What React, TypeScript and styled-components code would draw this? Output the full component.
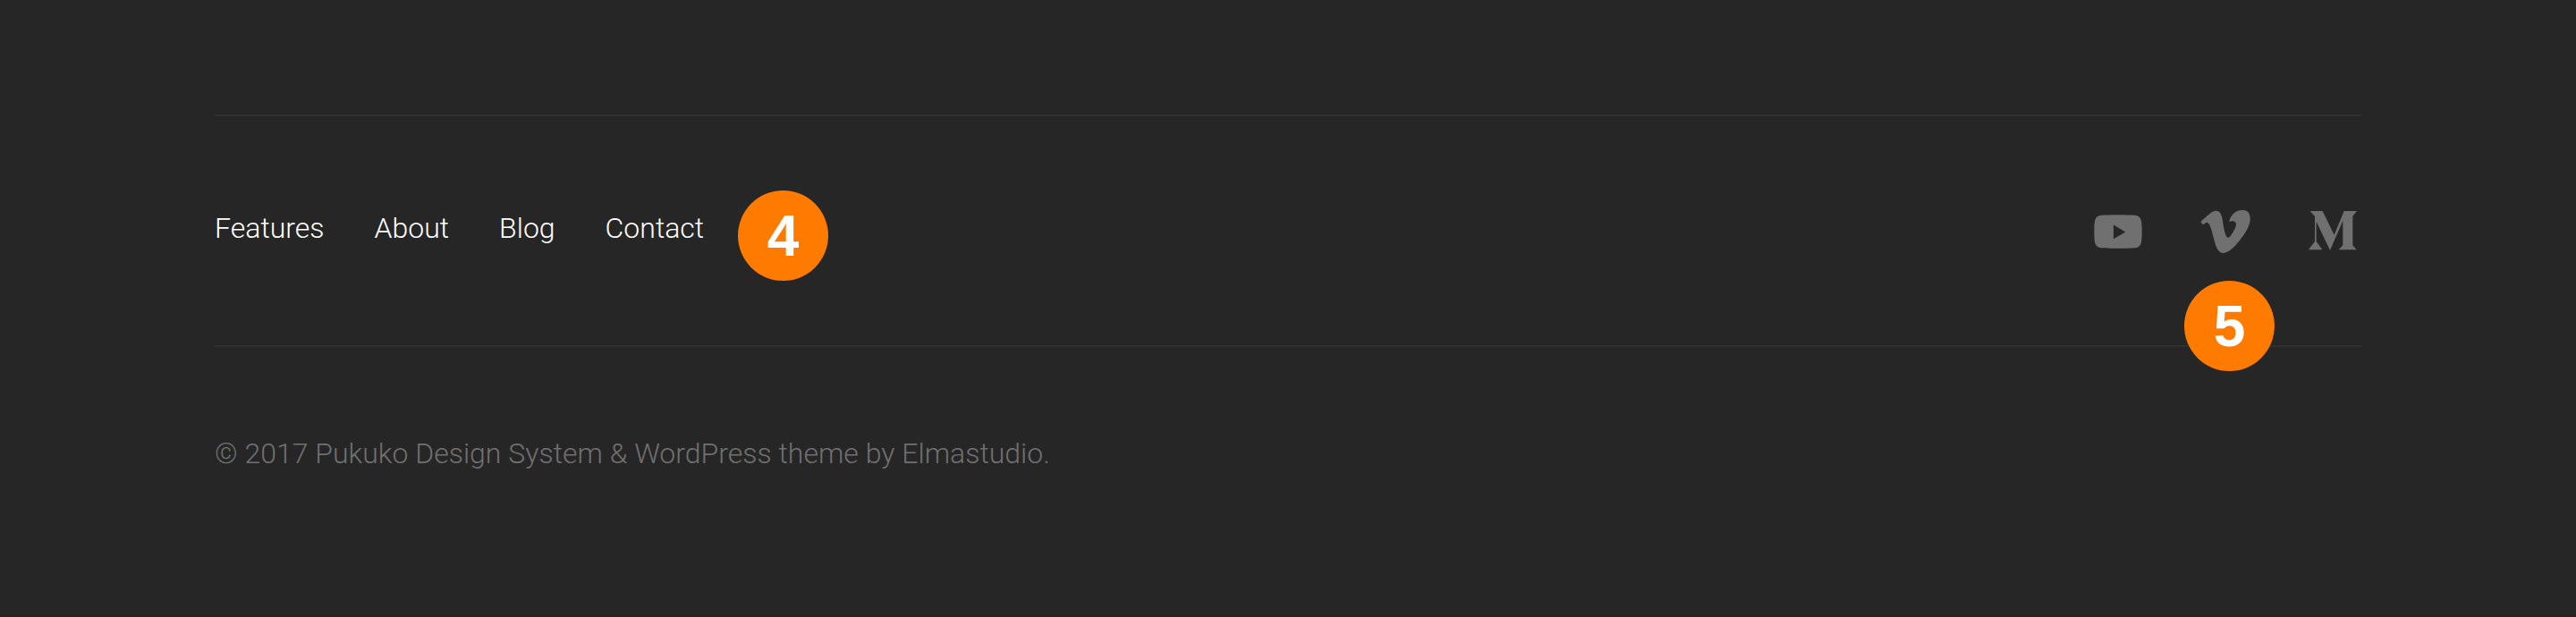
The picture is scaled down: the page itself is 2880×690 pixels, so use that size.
import React from 'react';
import styled, { createGlobalStyle } from 'styled-components';

const GlobalStyle = createGlobalStyle`
  *, *::before, *::after { box-sizing: border-box; }
  body {
    margin: 0;
    background: #262626;
    font-family: Roboto, "Liberation Sans", sans-serif;
    font-weight: 300;
    font-size: 32px;
    line-height: 48px;
  }
`;

const Footer = styled.footer`
  padding: 128px calc(100% / 12) 157px;
  border-bottom: 2px solid #252324;
`;

const FooterBar = styled.div`
  display: flex;
  flex-wrap: wrap;
  justify-content: space-between;
  align-items: flex-start;
  gap: 32px;
  padding: 97px 0 95px;
  border-top: 2px solid #303030;
  border-bottom: 2px solid #303030;
`;

const LinkList = styled.ul`
  position: relative;
  display: flex;
  gap: 56px;
  margin: 0;
  padding: 0;
  list-style: none;
`;

const NavItem = styled.li`
  padding-top: 4px;
`;

const NavLink = styled.a`
  display: block;
  color: #fff;
  text-decoration: none;
`;

const SocialItem = styled.li`
  position: relative;
`;

const SocialLink = styled.a`
  display: block;
  height: 64px;
  color: #707070;
`;

const Icon = styled.svg`
  display: block;
  width: 64px;
  height: 64px;
  fill: currentColor;
`;

const Badge = styled.span`
  position: absolute;
  display: flex;
  align-items: center;
  justify-content: center;
  width: 101px;
  height: 101px;
  border-radius: 50%;
  background: #ff7b00;
  color: #fff;
  font: bold 64px/64px "Liberation Sans", Arial, sans-serif;
`;

const NavBadge = styled(Badge)`
  top: -14px;
  left: calc(100% + 38px);
`;

const SocialBadge = styled(Badge)`
  top: 87px;
  left: -14px;
`;

const Copyright = styled.p`
  margin: 0;
  padding-top: 95px;
  color: #707070;
`;

const pages = ['Features', 'About', 'Blog', 'Contact'];

const networks = [
  {
    name: 'YouTube',
    viewBox: '0 0 24 24',
    path: 'M21.8 8.001s-.195-1.378-.795-1.985c-.76-.797-1.613-.801-2.004-.847-2.799-.202-6.997-.202-6.997-.202h-.009s-4.198 0-6.997.202c-.39.047-1.242.051-2.003.847-.6.607-.795 1.985-.795 1.985S2 9.62 2 11.238v1.517c0 1.618.2 3.237.2 3.237s.195 1.378.795 1.985c.761.797 1.76.771 2.205.855 1.6.153 6.8.201 6.8.201s4.203-.006 7.001-.209c.391-.047 1.243-.051 2.004-.847.6-.607.795-1.985.795-1.985s.2-1.618.2-3.237v-1.517C22 9.62 21.8 8.001 21.8 8.001zM10.1 15.1V9.2l5 2.95z',
  },
  {
    name: 'Vimeo',
    viewBox: '0 0 24 24',
    path: 'M22.396 7.164c-.093 2.026-1.507 4.8-4.245 8.32C15.323 19.161 12.93 21 10.97 21c-1.214 0-2.24-1.119-3.079-3.359-.56-2.053-1.119-4.106-1.68-6.159-.622-2.239-1.29-3.36-2.004-3.36-.156 0-.7.328-1.634.98l-.978-1.261c1.027-.903 2.04-1.806 3.037-2.71C6 3.95 7.03 3.328 7.716 3.265c1.619-.156 2.616.951 2.99 3.321.404 2.558.685 4.148.841 4.77.467 2.121.981 3.181 1.542 3.181.435 0 1.09-.689 1.963-2.065.871-1.376 1.338-2.422 1.401-3.142.125-1.187-.343-1.782-1.401-1.782-.498 0-1.012.115-1.541.341 1.023-3.35 2.977-4.977 5.862-4.884 2.139.063 3.148 1.45 3.024 4.159z',
    badge: '5',
  },
  {
    name: 'Medium',
    viewBox: '0 0 192 192',
    path: 'M20 27H62L101 107L134 27H177L163 44V142L176 157H116L130 142V60L87 159L41 62V129L61 157H15L36 129V45Z',
  },
];

export default function App() {
  return (
    <>
      <GlobalStyle />
      <Footer>
        <FooterBar>
          <nav aria-label="Footer">
            <LinkList>
              {pages.map((page) => (
                <NavItem key={page}>
                  <NavLink href={`#${page.toLowerCase()}`}>{page}</NavLink>
                </NavItem>
              ))}
              <NavBadge as="li">4</NavBadge>
            </LinkList>
          </nav>
          <LinkList>
            {networks.map(({ name, viewBox, path, badge }) => (
              <SocialItem key={name}>
                <SocialLink href={`#${name.toLowerCase()}`} aria-label={name}>
                  <Icon viewBox={viewBox} aria-hidden="true">
                    <path d={path} />
                  </Icon>
                </SocialLink>
                {badge && <SocialBadge>{badge}</SocialBadge>}
              </SocialItem>
            ))}
          </LinkList>
        </FooterBar>
        <Copyright>© 2017 Pukuko Design System &amp; WordPress theme by Elmastudio.</Copyright>
      </Footer>
    </>
  );
}
